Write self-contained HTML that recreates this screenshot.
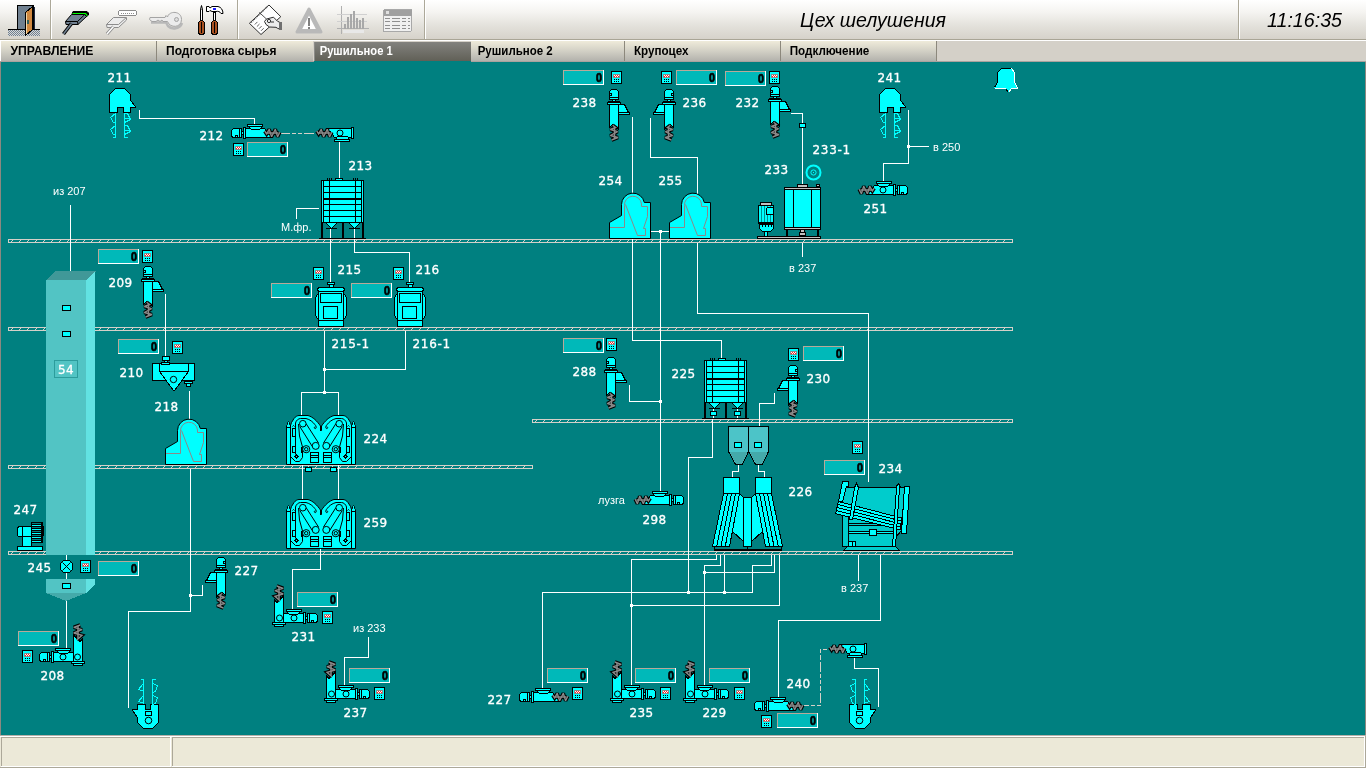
<!DOCTYPE html><html lang="ru"><head><meta charset="utf-8"><title>Цех шелушения</title><style>html,body{margin:0;padding:0;background:#008080;overflow:hidden}svg{display:block;will-change:transform}.lab{font-family:"DejaVu Sans","Liberation Sans",sans-serif;fill:#fff;stroke:#fff;stroke-width:.3px;letter-spacing:.4px}.sm{font-family:"Liberation Sans",sans-serif;fill:#fff}.dv{font-family:"Liberation Sans",sans-serif;font-weight:bold;font-size:12px;fill:#000;stroke:#000;stroke-width:.7px}.tab{font-family:"Liberation Sans",sans-serif;font-weight:bold;font-size:12px}.ttl{font-family:"Liberation Sans",sans-serif;font-style:italic;font-size:19.5px;fill:#000}</style></head><body><svg width="1366" height="768" viewBox="0 0 1366 768" shape-rendering="crispEdges"><defs><linearGradient id="tbg" x1="0" y1="0" x2="0" y2="1"><stop offset="0" stop-color="#ffffff"/><stop offset="0.3" stop-color="#f5f4f1"/><stop offset="0.65" stop-color="#e3e1db"/><stop offset="1" stop-color="#d5d1c9"/></linearGradient><linearGradient id="tab" x1="0" y1="0" x2="0" y2="1"><stop offset="0" stop-color="#efebda"/><stop offset="0.5" stop-color="#d2d0c5"/><stop offset="1" stop-color="#b3b2ac"/></linearGradient><linearGradient id="tabs" x1="0" y1="0" x2="0" y2="1"><stop offset="0" stop-color="#82827e"/><stop offset="1" stop-color="#616057"/></linearGradient><pattern id="dith" width="2" height="2" patternUnits="userSpaceOnUse"><rect width="2" height="2" fill="#d8d8d8"/><rect width="1" height="1" fill="#708090"/><rect x="1" y="1" width="1" height="1" fill="#708090"/></pattern><g id="disp"><rect x="0" y="0" width="41" height="15" fill="#ffffff"/><rect x="0" y="0" width="40" height="14" fill="#b9a999"/><rect x="1" y="1" width="39" height="13" fill="#00b9b9"/><text class="dv" x="33" y="12" textLength="6" lengthAdjust="spacingAndGlyphs">0</text></g><g id="calc"><rect x="0.5" y="0.5" width="10" height="12" fill="#00ffff" stroke="#000000"/><rect x="2.5" y="3.5" width="6" height="3" fill="#ff2020" stroke="#8a8a8a"/><rect x="3" y="4" width="1" height="1" fill="#fff"/><rect x="5" y="4" width="1" height="1" fill="#fff"/><rect x="7" y="4" width="1" height="1" fill="#fff"/><rect x="4" y="5" width="1" height="1" fill="#fff"/><rect x="6" y="5" width="1" height="1" fill="#fff"/><rect x="3" y="8" width="1" height="1" fill="#000"/><rect x="3" y="10" width="1" height="1" fill="#000"/><rect x="5" y="8" width="1" height="1" fill="#000"/><rect x="5" y="10" width="1" height="1" fill="#000"/><rect x="7" y="8" width="1" height="1" fill="#000"/><rect x="7" y="10" width="1" height="1" fill="#000"/></g><g id="hsc"><path d="M234.5,128.5 L241.5,128.5 L241.5,137.5 L234.5,137.5 Q231.5,137.5 231.5,134.5 L231.5,131.5 Q231.5,128.5 234.5,128.5 Z" fill="#00ffff" stroke="#000000"/><rect x="239" y="129" width="1" height="8" fill="#000000"/><rect x="235" y="135" width="3" height="2" fill="#000000"/><rect x="236" y="136" width="1" height="1" fill="#00ffff"/><rect x="241.5" y="131.5" width="2" height="3" fill="#00ffff" stroke="#000000"/><path d="M245.5,128.5 L264.5,128.5 L266.5,131.5 L268.5,131.5 L272.5,137.5 L245.5,137.5 Z" fill="#00ffff" stroke="#000000"/><rect x="243.5" y="127.5" width="2" height="11" fill="#00ffff" stroke="#000000"/><path d="M248.5,126.5 L262.5,126.5 L259.5,129.5 L251.5,129.5 Z" fill="#00ffff" stroke="#000000"/><rect x="247.5" y="124.5" width="15" height="2" fill="#00ffff" stroke="#000000"/><path d="M267,133 L278.5,133" fill="none" stroke="#000" stroke-width="3.6" shape-rendering="geometricPrecision"/><path d="M264.8,131.2 L266.6,134 L269.2,129.3 L271.6,136.8 L275.3,129.3 L277.6,136.8 L279.8,132.2" fill="none" stroke="#000" stroke-width="3.6" stroke-linejoin="miter" stroke-miterlimit="2.5" stroke-linecap="butt" shape-rendering="geometricPrecision"/><path d="M267,133 L278.5,133" fill="none" stroke="#8a8a8a" stroke-width="1.5" shape-rendering="geometricPrecision"/><path d="M264.8,131.2 L266.6,134 L269.2,129.3 L271.6,136.8 L275.3,129.3 L277.6,136.8 L279.8,132.2" fill="none" stroke="#8a8a8a" stroke-width="1.4" stroke-linejoin="miter" stroke-miterlimit="2.5" shape-rendering="geometricPrecision"/></g><g id="hscd"><path d="M234.5,128.5 L241.5,128.5 L241.5,137.5 L234.5,137.5 Q231.5,137.5 231.5,134.5 L231.5,131.5 Q231.5,128.5 234.5,128.5 Z" fill="#00ffff" stroke="#000000"/><rect x="239" y="129" width="1" height="8" fill="#000000"/><rect x="235" y="135" width="3" height="2" fill="#000000"/><rect x="236" y="136" width="1" height="1" fill="#00ffff"/><rect x="241.5" y="131.5" width="2" height="3" fill="#00ffff" stroke="#000000"/><path d="M245.5,128.5 L264.5,128.5 L266.5,131.5 L268.5,131.5 L272.5,137.5 L245.5,137.5 Z" fill="#00ffff" stroke="#000000"/><rect x="243.5" y="127.5" width="2" height="11" fill="#00ffff" stroke="#000000"/><path d="M248.5,126.5 L262.5,126.5 L259.5,129.5 L251.5,129.5 Z" fill="#00ffff" stroke="#000000"/><rect x="247.5" y="124.5" width="15" height="2" fill="#00ffff" stroke="#000000"/><circle cx="256" cy="133" r="3" fill="#00ffff" stroke="#000000" shape-rendering="geometricPrecision"/><path d="M267,133 L278.5,133" fill="none" stroke="#000" stroke-width="3.6" shape-rendering="geometricPrecision"/><path d="M264.8,131.2 L266.6,134 L269.2,129.3 L271.6,136.8 L275.3,129.3 L277.6,136.8 L279.8,132.2" fill="none" stroke="#000" stroke-width="3.6" stroke-linejoin="miter" stroke-miterlimit="2.5" stroke-linecap="butt" shape-rendering="geometricPrecision"/><path d="M267,133 L278.5,133" fill="none" stroke="#8a8a8a" stroke-width="1.5" shape-rendering="geometricPrecision"/><path d="M264.8,131.2 L266.6,134 L269.2,129.3 L271.6,136.8 L275.3,129.3 L277.6,136.8 L279.8,132.2" fill="none" stroke="#8a8a8a" stroke-width="1.4" stroke-linejoin="miter" stroke-miterlimit="2.5" shape-rendering="geometricPrecision"/></g><g id="send"><path d="M326.5,128.5 L351.5,128.5 L351.5,137.5 L334.5,137.5 L330.5,131.5 L328.5,131.5 Z" fill="#00ffff" stroke="#000000"/><rect x="351.5" y="127.5" width="2" height="11" fill="#00ffff" stroke="#000000"/><circle cx="340" cy="133" r="3" fill="#00ffff" stroke="#000000" shape-rendering="geometricPrecision"/><path d="M337.5,136.5 L347.5,136.5 L349.5,139.5 L335.5,139.5 Z" fill="#00ffff" stroke="#000000"/><rect x="334.5" y="139.5" width="15" height="2" fill="#00ffff" stroke="#000000"/><path d="M319,133 L330.5,133" fill="none" stroke="#000" stroke-width="3.6" shape-rendering="geometricPrecision"/><path d="M316.8,131.2 L318.6,134 L321.2,129.3 L323.6,136.8 L327.3,129.3 L329.6,136.8 L331.8,132.2" fill="none" stroke="#000" stroke-width="3.6" stroke-linejoin="miter" stroke-miterlimit="2.5" stroke-linecap="butt" shape-rendering="geometricPrecision"/><path d="M319,133 L330.5,133" fill="none" stroke="#8a8a8a" stroke-width="1.5" shape-rendering="geometricPrecision"/><path d="M316.8,131.2 L318.6,134 L321.2,129.3 L323.6,136.8 L327.3,129.3 L329.6,136.8 L331.8,132.2" fill="none" stroke="#8a8a8a" stroke-width="1.4" stroke-linejoin="miter" stroke-miterlimit="2.5" shape-rendering="geometricPrecision"/></g><g id="vf"><path d="M143.5,281.5 L152.5,281.5 L152.5,306.5 L150.5,303.5 L148.5,305.5 L146.5,301.5 L143.5,304.5 Z" fill="#00ffff" stroke="#000000"/><path d="M152.5,281.5 L158.5,281.5 L162.5,289.5 L152.5,289.5 Z" fill="#00ffff" stroke="#000000"/><rect x="152.5" y="289.5" width="11" height="2" fill="#00ffff" stroke="#000000"/><rect x="141.5" y="279.5" width="13" height="2" fill="#00ffff" stroke="#000000"/><rect x="146.5" y="276.5" width="3" height="3" fill="#00ffff" stroke="#000000"/><rect x="142" y="278" width="12" height="1" fill="#000000"/><path d="M143.5,276.5 L143.5,269.5 Q143.5,266.5 146.5,266.5 L149.5,266.5 Q152.5,266.5 152.5,269.5 L152.5,276.5 Z" fill="#00ffff" stroke="#000000"/><rect x="143" y="274" width="10" height="1" fill="#000000"/><rect x="143.5" y="270.5" width="2" height="2" fill="#00ffff" stroke="#000000"/><path d="M148.5,304.5 L148.5,316" fill="none" stroke="#000" stroke-width="3.6" shape-rendering="geometricPrecision"/><path d="M146.6,302.2 L149.6,304.5 L144.3,306.5 L151.6,308.7 L144.3,312.5 L151.9,314.5 L145.6,317" fill="none" stroke="#000" stroke-width="3.6" stroke-linejoin="miter" stroke-miterlimit="2.5" stroke-linecap="butt" shape-rendering="geometricPrecision"/><path d="M148.5,304.5 L148.5,316" fill="none" stroke="#8a8a8a" stroke-width="1.5" shape-rendering="geometricPrecision"/><path d="M146.6,302.2 L149.6,304.5 L144.3,306.5 L151.6,308.7 L144.3,312.5 L151.9,314.5 L145.6,317" fill="none" stroke="#8a8a8a" stroke-width="1.4" stroke-linejoin="miter" stroke-miterlimit="2.5" shape-rendering="geometricPrecision"/></g><g id="lc"><path d="M42.5,652.5 L49.5,652.5 L49.5,661.5 L42.5,661.5 Q39.5,661.5 39.5,658.5 L39.5,655.5 Q39.5,652.5 42.5,652.5 Z" fill="#00ffff" stroke="#000000"/><rect x="47" y="653" width="1" height="8" fill="#000000"/><rect x="43" y="659" width="3" height="2" fill="#000000"/><rect x="44" y="660" width="1" height="1" fill="#00ffff"/><rect x="49.5" y="655.5" width="2" height="3" fill="#00ffff" stroke="#000000"/><rect x="53.5" y="652.5" width="20" height="9" fill="#00ffff" stroke="#000000"/><rect x="51.5" y="651.5" width="2" height="11" fill="#00ffff" stroke="#000000"/><path d="M56.5,650.5 L70.5,650.5 L67.5,653.5 L59.5,653.5 Z" fill="#00ffff" stroke="#000000"/><rect x="55.5" y="648.5" width="15" height="2" fill="#00ffff" stroke="#000000"/><circle cx="63" cy="657" r="3" fill="#00ffff" stroke="#000000" shape-rendering="geometricPrecision"/><path d="M73.5,661.5 L73.5,633.5 L75.5,637.5 L77.5,636.5 L79.5,641.5 L81.5,640.5 L82.5,638.5 L82.5,661.5 Z" fill="#00ffff" stroke="#000000"/><circle cx="77.5" cy="657" r="3" fill="#00ffff" stroke="#000000" shape-rendering="geometricPrecision"/><rect x="71.5" y="661.5" width="13" height="2" fill="#00ffff" stroke="#000000"/><rect x="73.5" y="663.5" width="9" height="2" fill="#00ffff" stroke="#000000"/><path d="M78,626 L78,638.5" fill="none" stroke="#000" stroke-width="3.6" shape-rendering="geometricPrecision"/><path d="M80.2,625 L73.8,627.3 L82,629.7 L73.8,633 L82,635.3 L77,639.8" fill="none" stroke="#000" stroke-width="3.6" stroke-linejoin="miter" stroke-miterlimit="2.5" stroke-linecap="butt" shape-rendering="geometricPrecision"/><path d="M78,626 L78,638.5" fill="none" stroke="#8a8a8a" stroke-width="1.5" shape-rendering="geometricPrecision"/><path d="M80.2,625 L73.8,627.3 L82,629.7 L73.8,633 L82,635.3 L77,639.8" fill="none" stroke="#8a8a8a" stroke-width="1.4" stroke-linejoin="miter" stroke-miterlimit="2.5" shape-rendering="geometricPrecision"/></g><g id="ehead"><path d="M115.5,88.5 L124.5,88.5 L130.5,94.5 L130.5,100.5 L135.5,106.5 L135.5,107.5 L130.5,107.5 L130.5,112.5 L123.5,112.5 L123.5,107.5 L117.5,107.5 L117.5,112.5 L109.5,112.5 L109.5,94.5 Z" fill="#00ffff" stroke="#000000"/><path d="M113.5,137.5 L115.5,137.5 L115.5,113.5" fill="none" stroke="#00ffff" stroke-linecap="square"/><path d="M127.5,137.5 L124.5,137.5 L124.5,113.5" fill="none" stroke="#00ffff" stroke-linecap="square"/><path d="M115.5,113.5 L110.5,117.5 L113.5,122.5 L115.5,122.5" fill="none" stroke="#00ffff" stroke-linecap="square"/><path d="M124.5,113.5 L127.5,113.5 L130.5,119.5 L124.5,122.5" fill="none" stroke="#00ffff" stroke-linecap="square"/><path d="M124.5,118.5 L129.5,118.5" fill="none" stroke="#00ffff" stroke-linecap="square"/><path d="M115.5,125.5 L110.5,129.5 L113.5,134.5 L115.5,134.5" fill="none" stroke="#00ffff" stroke-linecap="square"/><path d="M124.5,125.5 L127.5,125.5 L130.5,131.5 L124.5,134.5" fill="none" stroke="#00ffff" stroke-linecap="square"/><path d="M124.5,130.5 L129.5,130.5" fill="none" stroke="#00ffff" stroke-linecap="square"/></g><g id="efoot"><path d="M137.5,704.5 L145.5,704.5 L145.5,709.5 L150.5,709.5 L150.5,704.5 L158.5,704.5 L158.5,722.5 L152.5,728.5 L143.5,728.5 L137.5,722.5 L137.5,717.5 L132.5,710.5 L132.5,709.5 L137.5,709.5 Z" fill="#00ffff" stroke="#000000"/><rect x="145.5" y="711.5" width="6" height="4" fill="#00ffff" stroke="#000000"/><circle cx="148.5" cy="720.5" r="3.3" fill="#00ffff" stroke="#000000" shape-rendering="geometricPrecision"/><path d="M141.5,679.5 L143.5,679.5 L143.5,703.5" fill="none" stroke="#00ffff" stroke-linecap="square"/><path d="M155.5,679.5 L152.5,679.5 L152.5,703.5" fill="none" stroke="#00ffff" stroke-linecap="square"/><path d="M143.5,683.5 L138.5,689.5 L141.5,690.5 L143.5,690.5" fill="none" stroke="#00ffff" stroke-linecap="square"/><path d="M152.5,683.5 L157.5,685.5 L155.5,691.5 L152.5,692.5" fill="none" stroke="#00ffff" stroke-linecap="square"/><path d="M143.5,695.5 L138.5,701.5 L141.5,702.5 L143.5,702.5" fill="none" stroke="#00ffff" stroke-linecap="square"/><path d="M152.5,695.5 L157.5,697.5 L155.5,703.5 L152.5,704.5" fill="none" stroke="#00ffff" stroke-linecap="square"/></g><g id="bin"><rect x="321" y="222" width="2" height="17" fill="#000000"/><rect x="342" y="222" width="2" height="17" fill="#000000"/><rect x="362" y="222" width="2" height="17" fill="#000000"/><rect x="319" y="238" width="47" height="1" fill="#000000"/><rect x="321.5" y="180.5" width="42" height="42" fill="#00ffff" stroke="#000000"/><rect x="323" y="180" width="1" height="43" fill="#000000"/><rect x="361" y="180" width="1" height="43" fill="#000000"/><rect x="329" y="180" width="1" height="43" fill="#000000"/><rect x="355" y="180" width="1" height="43" fill="#000000"/><rect x="323" y="186" width="39" height="1" fill="#000000"/><rect x="323" y="192" width="39" height="1" fill="#000000"/><rect x="323" y="204" width="39" height="1" fill="#000000"/><rect x="323" y="210" width="39" height="1" fill="#000000"/><rect x="323" y="216" width="39" height="1" fill="#000000"/><rect x="323" y="198" width="39" height="2" fill="#000000"/><rect x="335.5" y="178.5" width="7" height="2" fill="#00ffff" stroke="#000000"/><rect x="327" y="178" width="1" height="2" fill="#000000"/><rect x="329" y="178" width="1" height="2" fill="#000000"/><rect x="331" y="178" width="1" height="2" fill="#000000"/><rect x="353" y="178" width="1" height="2" fill="#000000"/><rect x="355" y="178" width="1" height="2" fill="#000000"/><rect x="357" y="178" width="1" height="2" fill="#000000"/><path d="M325.5,222.5 L337.5,222.5 L331.5,228.5 Z" fill="#00ffff" stroke="#000000"/><rect x="326" y="228" width="11" height="1" fill="#000000"/><path d="M348.5,222.5 L360.5,222.5 L354.5,228.5 Z" fill="#00ffff" stroke="#000000"/><rect x="349" y="228" width="11" height="1" fill="#000000"/></g><g id="m215"><path d="M318.5,293.5 L316.5,295.5 L315.5,298.5 L315.5,314.5 L316.5,317.5 L318.5,319.5" fill="#00ffff" stroke="#000000"/><path d="M343.5,293.5 L345.5,295.5 L346.5,298.5 L346.5,314.5 L345.5,317.5 L343.5,319.5" fill="#00ffff" stroke="#000000"/><rect x="318.5" y="291.5" width="25" height="35" fill="#00ffff" stroke="#000000"/><path d="M318.5,291.5 L317.5,289.5 L318.5,287.5 L343.5,287.5 L344.5,289.5 L343.5,291.5 Z" fill="#00ffff" stroke="#000000"/><rect x="329.5" y="284.5" width="4" height="3" fill="#00ffff" stroke="#000000"/><rect x="327.5" y="282.5" width="7" height="2" fill="#00ffff" stroke="#000000"/><rect x="320.5" y="293.5" width="21" height="9" fill="#00ffff" stroke="#000000"/><rect x="323.5" y="306.5" width="14" height="12" fill="#00ffff" stroke="#000000"/><rect x="318" y="320" width="26" height="1" fill="#000000"/></g><g id="m218"><path d="M165.5,464.5 L165.5,448.5 L177.5,441.5 L177.5,430.5 A11.500,11.5 0 0 1 200.3,428.5 L206.5,428.5 L206.5,464.5 Z" fill="#00ffff" stroke="#000000" shape-rendering="geometricPrecision"/><path d="M166,453.5 L180.5,453.5 L180.5,431.5 A8.5,8.5 0 0 1 197.5,430 L197.5,432.5 L203.5,432.5 L203.5,442.5 L199.5,454.5 L201.5,454.5 L201.5,461.5 L193.5,461.5 L181.500,430.5" fill="none" stroke="#8a8a8a" shape-rendering="geometricPrecision"/></g><g id="m224"><g id="h224"><path d="M321.5,464.5 L286.5,464.5 L286.5,425.5 L287.5,424.5 L287.5,422.5 L288.5,421.5 L289.5,422.5 L289.5,424.5 L290.5,425.5 L291.5,422.5 L294,418.5 C295.5,416.5 297.5,415.5 299,415.5 L308,415.5 C313,417 317,421 320.5,426 L320.5,430.5 L321.5,430.5 Z" fill="#00ffff" stroke="none" shape-rendering="geometricPrecision"/><path d="M321.5,464.5 L286.5,464.5 L286.5,425.5 L287.5,424.5 L287.5,422.5 L288.5,421.5 L289.5,422.5 L289.5,424.5 L290.5,425.5 L291.5,422.5 L294,418.5 C295.5,416.5 297.5,415.5 299,415.5 L308,415.5 C313,417 317,421 320.5,426 L320.5,430.5 L321.5,430.5" fill="none" stroke="#000000" shape-rendering="geometricPrecision"/><rect x="290" y="425" width="1" height="40" fill="#000000"/><rect x="286" y="427" width="5" height="1" fill="#000000"/><path d="M290.5,456.5 L295.5,461.5 L299.5,461.5 L302.5,457.5 L302.5,447 L299.500,436 L298.5,424" fill="none" stroke="#000000" shape-rendering="geometricPrecision"/><rect x="301" y="447" width="2" height="6" fill="#000000"/><path d="M295.5,454.5 L295.5,423 C296,420.5 298.5,418.5 300.5,418.5 L306,418.5 C310,419.5 313,422 314.8,424.5 C316.6,426 316.500,428.6 315.3,428.6 C314.2,428.6 314,427.2 315,426.6" fill="none" stroke="#000000" shape-rendering="geometricPrecision"/><path d="M292.500,426.5 L293.5,425.5 L294.5,426.5" fill="none" stroke="#000000" shape-rendering="geometricPrecision"/><path d="M299.8,426.5 L312.3,446.5 M306,423.5 L318.5,443" fill="none" stroke="#000000" shape-rendering="geometricPrecision"/><circle cx="302.8" cy="423.7" r="3.3" fill="#00ffff" stroke="#000000" shape-rendering="geometricPrecision"/><circle cx="315.7" cy="445.9" r="3.5" fill="#00ffff" stroke="#000000" shape-rendering="geometricPrecision"/><circle cx="306.2" cy="449.2" r="3.6" fill="#00ffff" stroke="#000000" shape-rendering="geometricPrecision"/><circle cx="306.2" cy="449.2" r="1.7" fill="#00ffff" stroke="#000000" shape-rendering="geometricPrecision"/><rect x="292.5" y="428.5" width="3" height="8" fill="#00ffff" stroke="#000000"/><rect x="292.5" y="446.5" width="3" height="6" fill="#00ffff" stroke="#000000"/><path d="M295,456.5 L296.5,455 L298,456.5 L296.5,458 Z" fill="#00ffff" stroke="#000000"/><rect x="310.5" y="452.5" width="8" height="10" fill="#00ffff" stroke="#000000"/><rect x="310" y="455" width="9" height="1" fill="#000000"/><rect x="310" y="457" width="9" height="1" fill="#000000"/></g><use href="#h224" transform="translate(642,0) scale(-1,1)"/><rect x="320" y="426" width="2" height="4" fill="#000000"/><rect x="320" y="430" width="1" height="1" fill="#000000"/></g><g id="hop2"><path d="M728.5,426.5 L748.5,426.5 L748.5,451.5 L742.5,464.5 L735.5,464.5 L728.5,451.5 Z" fill="#4cc4c8" stroke="#000000"/><path d="M729.5,452.5 L747.5,452.5 L741.5,463.5 L736.5,463.5 Z" fill="#44aaaa" stroke="#44aaaa"/><path d="M728.5,451.5 L735.5,464.5 L742.5,464.5 L748.5,451.5" fill="none" stroke="#000000"/><rect x="734.5" y="442.5" width="7" height="5" fill="#00ffff" stroke="#000000"/><path d="M748.5,426.5 L768.5,426.5 L768.5,451.5 L762.5,464.5 L755.5,464.5 L748.5,451.5 Z" fill="#4cc4c8" stroke="#000000"/><path d="M749.5,452.5 L767.5,452.5 L761.5,463.5 L756.5,463.5 Z" fill="#44aaaa" stroke="#44aaaa"/><path d="M748.5,451.5 L755.5,464.5 L762.5,464.5 L768.5,451.5" fill="none" stroke="#000000"/><rect x="754.5" y="442.5" width="7" height="5" fill="#00ffff" stroke="#000000"/></g><g id="m226"><path d="M739.5,493.5 L743.5,497.5 L743.5,541.5 L732.5,531.5 L729.5,546.5 Z" fill="#00ffff" stroke="#000000"/><path d="M755.5,493.5 L751.5,497.5 L751.5,541.5 L762.5,531.5 L765.5,546.5 Z" fill="#00ffff" stroke="#000000"/><path d="M723.5,493.5 L739.5,493.5 L729.5,546.5 L712.5,546.5 Z" fill="#00ffff" stroke="#000000"/><path d="M755.5,493.5 L771.5,493.5 L782.5,546.5 L765.5,546.5 Z" fill="#00ffff" stroke="#000000"/><path d="M727.5,493.5 L716.75,546.5" fill="none" stroke="#000000"/><path d="M759.5,493.5 L769.75,546.5" fill="none" stroke="#000000"/><path d="M731.5,493.5 L721,546.5" fill="none" stroke="#000000"/><path d="M763.5,493.5 L774,546.5" fill="none" stroke="#000000"/><path d="M735.5,493.5 L725.25,546.5" fill="none" stroke="#000000"/><path d="M767.5,493.5 L778.25,546.5" fill="none" stroke="#000000"/><rect x="743.5" y="497.5" width="8" height="49" fill="#00ffff" stroke="#000000"/><rect x="723.5" y="477.5" width="16" height="16" fill="#00ffff" stroke="#000000"/><rect x="755.5" y="477.5" width="16" height="16" fill="#00ffff" stroke="#000000"/><rect x="714" y="549" width="68" height="2" fill="#000000"/><rect x="714" y="547" width="1" height="3" fill="#000000"/><rect x="781" y="547" width="1" height="3" fill="#000000"/><rect x="747" y="547" width="1" height="3" fill="#000000"/></g><g id="m234"><path d="M847.5,546.5 L895.5,546.5 L899.5,550.5 L843.5,550.5 Z" fill="#00cccc" stroke="#000000"/><path d="M842.5,487.5 L904.5,487.5 L901.5,530.5 L895.5,537.5 L895.5,546.5 L842.5,546.5 Z" fill="#00cccc" stroke="#000000"/><rect x="848" y="523" width="46" height="1" fill="#000000"/><rect x="848" y="525" width="46" height="1" fill="#000000"/><rect x="848" y="531" width="46" height="1" fill="#000000"/><rect x="848" y="533" width="46" height="1" fill="#000000"/><rect x="849" y="532" width="44" height="1" fill="#00ffff"/><rect x="848" y="512" width="1" height="35" fill="#000000"/><rect x="869.5" y="529.5" width="7" height="6" fill="#00ffff" stroke="#000000"/><rect x="848.5" y="541.5" width="7" height="5" fill="#00ffff" stroke="#000000"/><rect x="852" y="541" width="1" height="6" fill="#000000"/><path d="M838.5,501.5 L901.5,518 L901.5,521 L837.5,504.5 Z" fill="#00ffff" stroke="#000000"/><path d="M837.8,504.5 L901.2,521 L901.2,524 L836.8,507.5 Z" fill="#00ffff" stroke="#000000"/><path d="M837.1,507.5 L900.9,524 L900.9,527 L836.1,510.5 Z" fill="#00ffff" stroke="#000000"/><path d="M836.4,510.5 L900.6,527 L900.6,530 L835.4,513.5 Z" fill="#00ffff" stroke="#000000"/><path d="M842.5,481.5 L848.5,481.5 L848.5,486.5 L846.5,486.5 L842.5,501.5 L838.5,501.5 Z" fill="#00ffff" stroke="#000000"/><path d="M856.5,483.5 L858.5,487.5 L852.5,519.5 L849.5,519.5 L854.5,487.5 Z" fill="#00ffff" stroke="#000000"/><path d="M898.5,483.5 L900.5,487.5 L899.5,487.5 L895.5,546.5 L892.5,546.5 L896.5,487.5 L895.5,487.5 Z" fill="#00ffff" stroke="#000000"/><path d="M904.5,486.5 L909.5,486.5 L906.5,533.5 L901.5,533.5 Z" fill="#00ffff" stroke="#000000"/></g><g id="tank"><rect x="786" y="229" width="2" height="9" fill="#000000"/><rect x="817" y="229" width="2" height="9" fill="#000000"/><rect x="800.5" y="229.5" width="4" height="3" fill="#c0c0c0" stroke="#000000"/><rect x="799.5" y="232.5" width="6" height="3" fill="#c0c0c0" stroke="#000000"/><rect x="757.5" y="236.5" width="63" height="2" fill="#c0c0c0" stroke="#000000"/><rect x="784.5" y="187.5" width="36" height="42" fill="#00ffff" stroke="#000000"/><rect x="784.5" y="187.5" width="36" height="2" fill="#c0c0c0" stroke="#000000"/><rect x="784.5" y="227.5" width="36" height="2" fill="#c0c0c0" stroke="#000000"/><rect x="793" y="189" width="1" height="39" fill="#000000"/><rect x="811" y="189" width="1" height="39" fill="#000000"/><rect x="797.5" y="184.5" width="10" height="3" fill="#c0c0c0" stroke="#000000"/><rect x="816.5" y="184.5" width="3" height="2" fill="#c0c0c0" stroke="#000000"/><rect x="760.5" y="202.5" width="11" height="3" fill="#c0c0c0" stroke="#000000"/><rect x="758.5" y="205.5" width="15" height="17" fill="#00ffff" stroke="#000000"/><rect x="761" y="206" width="1" height="16" fill="#009090"/><rect x="764" y="206" width="1" height="16" fill="#009090"/><rect x="767" y="206" width="1" height="16" fill="#009090"/><rect x="770" y="206" width="1" height="16" fill="#009090"/><rect x="766.5" y="207.5" width="7" height="7" rx="1.5" fill="#0ff" stroke="#000"/><rect x="758" y="222" width="16" height="2" fill="#000000"/><path d="M759.5,224.5 L773.5,224.5 L773.5,228.5 L770.5,231.5 L762.5,231.5 L759.5,228.5 Z" fill="#00ffff" stroke="#000000"/><rect x="762" y="224" width="1" height="3" fill="#000000"/><rect x="765" y="224" width="1" height="3" fill="#000000"/><rect x="768" y="224" width="1" height="3" fill="#000000"/><rect x="771" y="224" width="1" height="3" fill="#000000"/><rect x="764.5" y="231.5" width="3" height="5" fill="#00ffff" stroke="#000000"/></g><g id="fan"><rect x="22.5" y="536.5" width="9" height="10" fill="#00ffff" stroke="#000000"/><path d="M31.5,526.5 L31.5,536.5 L20,536.5 Q17.5,536.5 17.5,534 L17.5,529 Q17.5,526.5 20,526.5 Z" fill="#0ff" stroke="#000"/><rect x="22" y="526" width="1" height="21" fill="#000000"/><rect x="31" y="522" width="12" height="21" fill="#000000"/><rect x="32" y="523" width="9" height="1" fill="#008080"/><rect x="32" y="525" width="9" height="1" fill="#00ffff"/><rect x="32" y="527" width="9" height="1" fill="#008080"/><rect x="32" y="529" width="9" height="1" fill="#00ffff"/><rect x="32" y="531" width="9" height="1" fill="#008080"/><rect x="32" y="533" width="9" height="1" fill="#00ffff"/><rect x="32" y="535" width="9" height="1" fill="#008080"/><rect x="32" y="537" width="9" height="1" fill="#00ffff"/><rect x="32" y="539" width="9" height="1" fill="#008080"/><rect x="32" y="541" width="9" height="1" fill="#00ffff"/><rect x="42" y="526" width="2" height="10" fill="#000000"/><rect x="17.5" y="546.5" width="25" height="4" fill="#00ffff" stroke="#000000"/></g><g id="hop210"><rect x="184.5" y="381.5" width="8" height="2" fill="#00ffff" stroke="#000000"/><rect x="186.5" y="383.5" width="4" height="3" fill="#00ffff" stroke="#000000"/><rect x="152.5" y="363.5" width="42" height="17" fill="#00ffff" stroke="#000000"/><rect x="159" y="363" width="1" height="9" fill="#000000"/><rect x="188" y="363" width="1" height="9" fill="#000000"/><path d="M159.5,371.5 L188.5,371.5 L174.5,390.5 L173.5,390.5 Z" fill="#00ffff" stroke="#000000"/><circle cx="173.5" cy="379.5" r="3.2" fill="#00ffff" stroke="#000000" shape-rendering="geometricPrecision"/><rect x="161.5" y="362.5" width="8" height="2" fill="#00ffff" stroke="#000000"/><rect x="164.5" y="360.5" width="3" height="2" fill="#00ffff" stroke="#000000"/><rect x="162.5" y="356.5" width="7" height="4" fill="#00ffff" stroke="#000000"/></g><g id="bell"><path d="M1001.5,68.5 L1011.5,68.5 L1014.5,72.5 L1014.5,82.5 L1017.5,87.5 L1017.5,88.5 L1011.5,88.5 L1008.5,92.5 L1005.5,88.5 L994.5,88.5 L994.5,87.5 L997.5,82.5 L997.5,72.5 Z" fill="#00ffff" stroke="none"/><path d="M1011.5,68.5 L1001.5,68.5 L997.5,72.5 L997.5,82.5 L994.5,87.5 M1005.5,88.5 L1008,92" fill="none" stroke="#000000"/><path d="M1011.5,68.5 L1014.5,72.5 L1014.5,82.5 L1017.5,87.5 L1017.5,88.5 L1011.5,88.5 L1008.5,92.5 M1005.5,88.5 L994.5,88.5" fill="none" stroke="#ffffff"/></g></defs><rect x="0" y="62" width="1366" height="673" fill="#008080"/>
<rect x="0" y="0" width="1366" height="40" fill="url(#tbg)"/>
<rect x="0" y="39" width="1366" height="1" fill="#a9a596"/>
<rect x="0" y="40" width="1366" height="1" fill="#ffffff"/>
<rect x="50" y="0" width="1" height="39" fill="#aca899"/>
<rect x="51" y="0" width="1" height="39" fill="#ffffff"/>
<rect x="237" y="0" width="1" height="39" fill="#aca899"/>
<rect x="238" y="0" width="1" height="39" fill="#ffffff"/>
<rect x="424" y="0" width="1" height="39" fill="#aca899"/>
<rect x="425" y="0" width="1" height="39" fill="#ffffff"/>
<rect x="1238" y="0" width="1" height="39" fill="#aca899"/>
<rect x="1239" y="0" width="1" height="39" fill="#ffffff"/>
<rect x="0" y="41" width="1366" height="20" fill="#d4d0c8"/>
<rect x="1" y="41" width="155" height="20" fill="url(#tab)"/>
<rect x="156" y="41" width="1" height="20" fill="#8c887c"/>
<text class="tab" x="10.4" y="55" textLength="83" lengthAdjust="spacingAndGlyphs" fill="#000">УПРАВЛЕНИЕ</text>
<rect x="157" y="41" width="156" height="20" fill="url(#tab)"/>
<text class="tab" x="166" y="55" textLength="110.5" lengthAdjust="spacingAndGlyphs" fill="#000">Подготовка сырья</text>
<rect x="315" y="42" width="156" height="19" fill="url(#tabs)"/>
<rect x="314" y="42" width="1" height="19" fill="#8c8c88"/>
<text class="tab" x="319.7" y="55" textLength="73" lengthAdjust="spacingAndGlyphs" fill="#fff">Рушильное 1</text>
<rect x="471" y="41" width="153" height="20" fill="url(#tab)"/>
<rect x="624" y="41" width="1" height="20" fill="#8c887c"/>
<text class="tab" x="477.7" y="55" textLength="75" lengthAdjust="spacingAndGlyphs" fill="#000">Рушильное 2</text>
<rect x="625" y="41" width="155" height="20" fill="url(#tab)"/>
<rect x="780" y="41" width="1" height="20" fill="#8c887c"/>
<text class="tab" x="633.9" y="55" textLength="54.6" lengthAdjust="spacingAndGlyphs" fill="#000">Крупоцех</text>
<rect x="781" y="41" width="155" height="20" fill="url(#tab)"/>
<rect x="936" y="41" width="1" height="20" fill="#8c887c"/>
<text class="tab" x="789.7" y="55" textLength="79.6" lengthAdjust="spacingAndGlyphs" fill="#000">Подключение</text>
<rect x="0" y="41" width="1" height="20" fill="#ffffff"/>
<rect x="0" y="61" width="314" height="1" fill="#a9a29e"/>
<rect x="471" y="61" width="895" height="1" fill="#a9a29e"/>
<rect x="314" y="61" width="157" height="1" fill="#008080"/>
<text class="ttl" x="800" y="27" textLength="146" lengthAdjust="spacingAndGlyphs">Цех шелушения</text>
<text class="ttl" x="1267" y="27" textLength="75" lengthAdjust="spacingAndGlyphs">11:16:35</text>
<rect x="0" y="62" width="1" height="673" fill="#8c8880"/>
<rect x="1365" y="62" width="1" height="673" fill="#8c8880"/>
<rect x="0" y="735" width="1366" height="33" fill="#ece9d8"/>
<rect x="0" y="735" width="1366" height="1" fill="#b4b0a8"/>
<rect x="0" y="736" width="1366" height="1" fill="#ffffff"/>
<rect x="1" y="737" width="169" height="1" fill="#aca899"/>
<rect x="1" y="737" width="1" height="29" fill="#aca899"/>
<rect x="1" y="766" width="170" height="1" fill="#fff"/>
<rect x="170" y="737" width="1" height="30" fill="#fff"/>
<rect x="172" y="737" width="1192" height="1" fill="#aca899"/>
<rect x="172" y="737" width="1" height="29" fill="#aca899"/>
<rect x="172" y="766" width="1193" height="1" fill="#fff"/>
<rect x="1364" y="737" width="1" height="30" fill="#fff"/>
<rect x="1365" y="736" width="1" height="32" fill="#aca899"/>
<rect x="0" y="767" width="1366" height="1" fill="#aca899"/>
<rect x="34" y="7" width="1" height="22" fill="#202840"/>
<rect x="17.5" y="5.5" width="16" height="24" fill="#708090" stroke="#000000"/>
<rect x="8" y="30" width="32" height="6" fill="url(#dith)"/>
<rect x="8" y="29" width="10" height="1" fill="#000000"/>
<rect x="33" y="29" width="7" height="1" fill="#000000"/>
<path d="M32.5,6.5 L32.5,29.5 L25.5,35.5 L25.5,12.5 Z" fill="#d08840" stroke="#000000"/>
<rect x="26" y="13" width="1" height="21" fill="#f4d8a8"/>
<rect x="27.5" y="20.5" width="1" height="3" fill="#c0e0e0" stroke="#306060"/>
<path d="M73,11.5 L87,11.5 L88.5,13 L88.5,15 L86,17 L72,13.5 Z" fill="#000000" stroke="#000000" shape-rendering="geometricPrecision"/>
<path d="M72.5,13.6 L85.5,13.6 L87.3,15.6" fill="none" stroke="#00ff00" stroke-width="1.4" shape-rendering="geometricPrecision"/>
<path d="M71.5,14.5 L84.5,14.5 L86.5,16.5 L78,24.5 L66,24.5 L65.5,21.5 Z" fill="#708090" stroke="#000000" shape-rendering="geometricPrecision"/>
<path d="M65.5,21.5 L77.5,21.5 L84.5,14.8 M77.5,21.5 L78,24.5" fill="none" stroke="#000000" shape-rendering="geometricPrecision"/>
<path d="M71.5,23.5 L63.5,34" fill="none" stroke="#000000" stroke-width="3.6" shape-rendering="geometricPrecision"/>
<path d="M71.5,23.5 L63.5,34" fill="none" stroke="#708090" stroke-width="1.6" shape-rendering="geometricPrecision"/>
<rect x="118.5" y="10.5" width="18" height="5" rx="2" fill="#fff" stroke="#8c8c8c"/>
<rect x="121" y="13" width="1" height="1" fill="#8c8c8c"/>
<rect x="123" y="13" width="1" height="1" fill="#8c8c8c"/>
<rect x="125" y="13" width="1" height="1" fill="#8c8c8c"/>
<rect x="127" y="13" width="1" height="1" fill="#8c8c8c"/>
<rect x="129" y="13" width="1" height="1" fill="#8c8c8c"/>
<rect x="131" y="13" width="1" height="1" fill="#8c8c8c"/>
<rect x="133" y="13" width="1" height="1" fill="#8c8c8c"/>
<path d="M113.5,17.5 L126.5,17.5 L126.5,20 L118.5,27.5 L107,27.5 L106.5,24.5 Z" fill="#ececec" stroke="#8c8c8c" shape-rendering="geometricPrecision"/>
<path d="M106.5,24.5 L118.5,24.5 L126,17.8" fill="none" stroke="#8c8c8c" shape-rendering="geometricPrecision"/>
<path d="M113.5,26.5 L107,34" fill="none" stroke="#8c8c8c" stroke-width="3.2" shape-rendering="geometricPrecision"/>
<path d="M113.5,26.5 L107,34" fill="none" stroke="#fff" stroke-width="1.4" shape-rendering="geometricPrecision"/>
<path d="M151,22.5 L166,22.5 L168,26 C172,30 180,29 182,23" fill="none" stroke="#b8b8b8" stroke-width="2.5" shape-rendering="geometricPrecision"/>
<path d="M150,17.5 L165,17.5 L166,15.5 L167.5,17 C169,10.5 181.5,10.5 181.5,19.5 C181.500,28 170,28.500 167.5,21.5 L163,21.5 L162,20 L160,21.5 L158,20 L156,21.5 L152,21.500 L149.5,19.5 Z" fill="#ececec" stroke="#a4a4a4" shape-rendering="geometricPrecision"/>
<circle cx="176.5" cy="19.5" r="2" fill="#dcdcdc" stroke="#a4a4a4" shape-rendering="geometricPrecision"/>
<rect x="198.5" y="20.5" width="6" height="14" rx="3" fill="#a85020" stroke="#000"/>
<rect x="201" y="22" width="1" height="11" fill="#000000"/>
<rect x="200.5" y="9.5" width="2" height="11" fill="#fff" stroke="#000000"/>
<path d="M200.5,9.5 L201.5,5.5 L202.5,9.5" fill="#fff" stroke="#000000" shape-rendering="geometricPrecision"/>
<rect x="211.5" y="20.5" width="6" height="14" rx="3" fill="#a85020" stroke="#000"/>
<rect x="214" y="22" width="1" height="11" fill="#000000"/>
<rect x="213.5" y="12.5" width="2" height="8" fill="#fff" stroke="#000000"/>
<path d="M206.5,6.5 L209,6.5 L210,8 L212,6.500 L218,6.5 C221,7 223,10 223,13.5 L221,13.500 C220,11.5 218,11 216,11.5 L212,11.5 L210,10.500 L209,11.5 L206.5,11.5 Z" fill="#fff" stroke="#000000" shape-rendering="geometricPrecision"/>
<rect x="213" y="8" width="3" height="2" fill="#2020ff"/>
<path d="M269,5 L280.8,16.7 L261,34.5 L249.4,23.3 Z" fill="#fff" stroke="#303030" shape-rendering="geometricPrecision"/>
<path d="M267.6,6.3 L251,22.800" fill="none" stroke="#505050" stroke-width="1.2" stroke-dasharray="1 1" shape-rendering="geometricPrecision"/>
<path d="M259,12.5 L261,14 L274,26" fill="none" stroke="#404040" stroke-width=".9" shape-rendering="geometricPrecision"/>
<path d="M254.8,24.5 l2.6,-2.6" fill="none" stroke="#505050" stroke-width=".9" shape-rendering="geometricPrecision"/>
<path d="M256.9,26.6 l2.6,-2.6" fill="none" stroke="#505050" stroke-width=".9" shape-rendering="geometricPrecision"/>
<path d="M259,28.7 l2.6,-2.6" fill="none" stroke="#505050" stroke-width=".9" shape-rendering="geometricPrecision"/>
<path d="M261.1,30.8 l2.6,-2.6" fill="none" stroke="#505050" stroke-width=".9" shape-rendering="geometricPrecision"/>
<path d="M264.5,21.500 L266.5,19 L273.5,17.2 L277.8,21.5 L279.5,22 L279.5,29 L277.5,28.3 L276,27.3 L269.5,27 L266,24.5 Z" fill="#ececec" stroke="#303030" shape-rendering="geometricPrecision"/>
<rect x="279" y="22" width="3" height="8" fill="#707070"/>
<circle cx="269" cy="21" r="1.6" fill="#fff" stroke="#303030" shape-rendering="geometricPrecision"/>
<path d="M270.5,22 L274,22" fill="none" stroke="#303030" shape-rendering="geometricPrecision"/>
<path d="M309,9 L321,32 L297,32 Z" fill="#b9b9b9" stroke="#b9b9b9" stroke-width="3" stroke-linejoin="round" shape-rendering="geometricPrecision"/>
<path d="M309,15.5 L315.8,29 L302.2,29 Z" fill="#fff" stroke="none" shape-rendering="geometricPrecision"/>
<rect x="308" y="18" width="2" height="8" fill="#808080"/>
<rect x="308" y="27" width="2" height="2" fill="#808080"/>
<rect x="341" y="6" width="1" height="28" fill="#b0b0b0"/>
<rect x="337" y="28" width="32" height="1" fill="#b0b0b0"/>
<rect x="337" y="14" width="30" height="1" fill="#d0d0d0"/>
<rect x="337" y="21" width="30" height="1" fill="#d0d0d0"/>
<rect x="344" y="24" width="2" height="5" fill="#a8a8a8"/>
<rect x="347" y="17" width="2" height="12" fill="#a8a8a8"/>
<rect x="350" y="14" width="2" height="15" fill="#a8a8a8"/>
<rect x="353" y="11" width="2" height="18" fill="#a8a8a8"/>
<rect x="356" y="18" width="2" height="11" fill="#a8a8a8"/>
<rect x="359" y="20" width="2" height="9" fill="#a8a8a8"/>
<rect x="362" y="18" width="2" height="11" fill="#a8a8a8"/>
<rect x="343" y="30" width="21" height="3" fill="#e8e8e8"/>
<rect x="383.5" y="9.5" width="28" height="22" rx="1.500" fill="#f0f0f0" stroke="#a8a8a8"/>
<rect x="384" y="10" width="28" height="6" fill="#a0a0a0"/>
<rect x="386" y="11" width="3" height="3" fill="#e0e0e0"/>
<rect x="385" y="18" width="5" height="1" fill="#909090"/>
<rect x="392" y="18" width="8" height="1" fill="#909090"/>
<rect x="402" y="18" width="4" height="1" fill="#909090"/>
<rect x="408" y="18" width="2" height="1" fill="#909090"/>
<rect x="385" y="21" width="5" height="1" fill="#909090"/>
<rect x="392" y="21" width="8" height="1" fill="#909090"/>
<rect x="402" y="21" width="4" height="1" fill="#909090"/>
<rect x="408" y="21" width="2" height="1" fill="#909090"/>
<rect x="385" y="25" width="5" height="1" fill="#909090"/>
<rect x="392" y="25" width="8" height="1" fill="#909090"/>
<rect x="402" y="25" width="4" height="1" fill="#909090"/>
<rect x="408" y="25" width="2" height="1" fill="#909090"/>
<rect x="385" y="28" width="5" height="1" fill="#909090"/>
<rect x="392" y="28" width="8" height="1" fill="#909090"/>
<rect x="402" y="28" width="4" height="1" fill="#909090"/>
<rect x="408" y="28" width="2" height="1" fill="#909090"/>
<rect x="8" y="239" width="1005" height="1" fill="#d4d0c8"/>
<rect x="8" y="242" width="1005" height="1" fill="#d4d0c8"/>
<rect x="8" y="239" width="1" height="4" fill="#d4d0c8"/>
<rect x="1012" y="239" width="1" height="4" fill="#d4d0c8"/>
<path d="M12,240 h1 M11,241 h1 M20,240 h1 M19,241 h1 M28,240 h1 M27,241 h1 M36,240 h1 M35,241 h1 M44,240 h1 M43,241 h1 M52,240 h1 M51,241 h1 M60,240 h1 M59,241 h1 M68,240 h1 M67,241 h1 M76,240 h1 M75,241 h1 M84,240 h1 M83,241 h1 M92,240 h1 M91,241 h1 M100,240 h1 M99,241 h1 M108,240 h1 M107,241 h1 M116,240 h1 M115,241 h1 M124,240 h1 M123,241 h1 M132,240 h1 M131,241 h1 M140,240 h1 M139,241 h1 M148,240 h1 M147,241 h1 M156,240 h1 M155,241 h1 M164,240 h1 M163,241 h1 M172,240 h1 M171,241 h1 M180,240 h1 M179,241 h1 M188,240 h1 M187,241 h1 M196,240 h1 M195,241 h1 M204,240 h1 M203,241 h1 M212,240 h1 M211,241 h1 M220,240 h1 M219,241 h1 M228,240 h1 M227,241 h1 M236,240 h1 M235,241 h1 M244,240 h1 M243,241 h1 M252,240 h1 M251,241 h1 M260,240 h1 M259,241 h1 M268,240 h1 M267,241 h1 M276,240 h1 M275,241 h1 M284,240 h1 M283,241 h1 M292,240 h1 M291,241 h1 M300,240 h1 M299,241 h1 M308,240 h1 M307,241 h1 M316,240 h1 M315,241 h1 M324,240 h1 M323,241 h1 M332,240 h1 M331,241 h1 M340,240 h1 M339,241 h1 M348,240 h1 M347,241 h1 M356,240 h1 M355,241 h1 M364,240 h1 M363,241 h1 M372,240 h1 M371,241 h1 M380,240 h1 M379,241 h1 M388,240 h1 M387,241 h1 M396,240 h1 M395,241 h1 M404,240 h1 M403,241 h1 M412,240 h1 M411,241 h1 M420,240 h1 M419,241 h1 M428,240 h1 M427,241 h1 M436,240 h1 M435,241 h1 M444,240 h1 M443,241 h1 M452,240 h1 M451,241 h1 M460,240 h1 M459,241 h1 M468,240 h1 M467,241 h1 M476,240 h1 M475,241 h1 M484,240 h1 M483,241 h1 M492,240 h1 M491,241 h1 M500,240 h1 M499,241 h1 M508,240 h1 M507,241 h1 M516,240 h1 M515,241 h1 M524,240 h1 M523,241 h1 M532,240 h1 M531,241 h1 M540,240 h1 M539,241 h1 M548,240 h1 M547,241 h1 M556,240 h1 M555,241 h1 M564,240 h1 M563,241 h1 M572,240 h1 M571,241 h1 M580,240 h1 M579,241 h1 M588,240 h1 M587,241 h1 M596,240 h1 M595,241 h1 M604,240 h1 M603,241 h1 M612,240 h1 M611,241 h1 M620,240 h1 M619,241 h1 M628,240 h1 M627,241 h1 M636,240 h1 M635,241 h1 M644,240 h1 M643,241 h1 M652,240 h1 M651,241 h1 M660,240 h1 M659,241 h1 M668,240 h1 M667,241 h1 M676,240 h1 M675,241 h1 M684,240 h1 M683,241 h1 M692,240 h1 M691,241 h1 M700,240 h1 M699,241 h1 M708,240 h1 M707,241 h1 M716,240 h1 M715,241 h1 M724,240 h1 M723,241 h1 M732,240 h1 M731,241 h1 M740,240 h1 M739,241 h1 M748,240 h1 M747,241 h1 M756,240 h1 M755,241 h1 M764,240 h1 M763,241 h1 M772,240 h1 M771,241 h1 M780,240 h1 M779,241 h1 M788,240 h1 M787,241 h1 M796,240 h1 M795,241 h1 M804,240 h1 M803,241 h1 M812,240 h1 M811,241 h1 M820,240 h1 M819,241 h1 M828,240 h1 M827,241 h1 M836,240 h1 M835,241 h1 M844,240 h1 M843,241 h1 M852,240 h1 M851,241 h1 M860,240 h1 M859,241 h1 M868,240 h1 M867,241 h1 M876,240 h1 M875,241 h1 M884,240 h1 M883,241 h1 M892,240 h1 M891,241 h1 M900,240 h1 M899,241 h1 M908,240 h1 M907,241 h1 M916,240 h1 M915,241 h1 M924,240 h1 M923,241 h1 M932,240 h1 M931,241 h1 M940,240 h1 M939,241 h1 M948,240 h1 M947,241 h1 M956,240 h1 M955,241 h1 M964,240 h1 M963,241 h1 M972,240 h1 M971,241 h1 M980,240 h1 M979,241 h1 M988,240 h1 M987,241 h1 M996,240 h1 M995,241 h1 M1004,240 h1 M1003,241 h1 " stroke="#d4d0c8" fill="none" transform="translate(0,0.5)"/>
<rect x="8" y="327" width="1005" height="1" fill="#d4d0c8"/>
<rect x="8" y="330" width="1005" height="1" fill="#d4d0c8"/>
<rect x="8" y="327" width="1" height="4" fill="#d4d0c8"/>
<rect x="1012" y="327" width="1" height="4" fill="#d4d0c8"/>
<path d="M12,328 h1 M11,329 h1 M20,328 h1 M19,329 h1 M28,328 h1 M27,329 h1 M36,328 h1 M35,329 h1 M44,328 h1 M43,329 h1 M52,328 h1 M51,329 h1 M60,328 h1 M59,329 h1 M68,328 h1 M67,329 h1 M76,328 h1 M75,329 h1 M84,328 h1 M83,329 h1 M92,328 h1 M91,329 h1 M100,328 h1 M99,329 h1 M108,328 h1 M107,329 h1 M116,328 h1 M115,329 h1 M124,328 h1 M123,329 h1 M132,328 h1 M131,329 h1 M140,328 h1 M139,329 h1 M148,328 h1 M147,329 h1 M156,328 h1 M155,329 h1 M164,328 h1 M163,329 h1 M172,328 h1 M171,329 h1 M180,328 h1 M179,329 h1 M188,328 h1 M187,329 h1 M196,328 h1 M195,329 h1 M204,328 h1 M203,329 h1 M212,328 h1 M211,329 h1 M220,328 h1 M219,329 h1 M228,328 h1 M227,329 h1 M236,328 h1 M235,329 h1 M244,328 h1 M243,329 h1 M252,328 h1 M251,329 h1 M260,328 h1 M259,329 h1 M268,328 h1 M267,329 h1 M276,328 h1 M275,329 h1 M284,328 h1 M283,329 h1 M292,328 h1 M291,329 h1 M300,328 h1 M299,329 h1 M308,328 h1 M307,329 h1 M316,328 h1 M315,329 h1 M324,328 h1 M323,329 h1 M332,328 h1 M331,329 h1 M340,328 h1 M339,329 h1 M348,328 h1 M347,329 h1 M356,328 h1 M355,329 h1 M364,328 h1 M363,329 h1 M372,328 h1 M371,329 h1 M380,328 h1 M379,329 h1 M388,328 h1 M387,329 h1 M396,328 h1 M395,329 h1 M404,328 h1 M403,329 h1 M412,328 h1 M411,329 h1 M420,328 h1 M419,329 h1 M428,328 h1 M427,329 h1 M436,328 h1 M435,329 h1 M444,328 h1 M443,329 h1 M452,328 h1 M451,329 h1 M460,328 h1 M459,329 h1 M468,328 h1 M467,329 h1 M476,328 h1 M475,329 h1 M484,328 h1 M483,329 h1 M492,328 h1 M491,329 h1 M500,328 h1 M499,329 h1 M508,328 h1 M507,329 h1 M516,328 h1 M515,329 h1 M524,328 h1 M523,329 h1 M532,328 h1 M531,329 h1 M540,328 h1 M539,329 h1 M548,328 h1 M547,329 h1 M556,328 h1 M555,329 h1 M564,328 h1 M563,329 h1 M572,328 h1 M571,329 h1 M580,328 h1 M579,329 h1 M588,328 h1 M587,329 h1 M596,328 h1 M595,329 h1 M604,328 h1 M603,329 h1 M612,328 h1 M611,329 h1 M620,328 h1 M619,329 h1 M628,328 h1 M627,329 h1 M636,328 h1 M635,329 h1 M644,328 h1 M643,329 h1 M652,328 h1 M651,329 h1 M660,328 h1 M659,329 h1 M668,328 h1 M667,329 h1 M676,328 h1 M675,329 h1 M684,328 h1 M683,329 h1 M692,328 h1 M691,329 h1 M700,328 h1 M699,329 h1 M708,328 h1 M707,329 h1 M716,328 h1 M715,329 h1 M724,328 h1 M723,329 h1 M732,328 h1 M731,329 h1 M740,328 h1 M739,329 h1 M748,328 h1 M747,329 h1 M756,328 h1 M755,329 h1 M764,328 h1 M763,329 h1 M772,328 h1 M771,329 h1 M780,328 h1 M779,329 h1 M788,328 h1 M787,329 h1 M796,328 h1 M795,329 h1 M804,328 h1 M803,329 h1 M812,328 h1 M811,329 h1 M820,328 h1 M819,329 h1 M828,328 h1 M827,329 h1 M836,328 h1 M835,329 h1 M844,328 h1 M843,329 h1 M852,328 h1 M851,329 h1 M860,328 h1 M859,329 h1 M868,328 h1 M867,329 h1 M876,328 h1 M875,329 h1 M884,328 h1 M883,329 h1 M892,328 h1 M891,329 h1 M900,328 h1 M899,329 h1 M908,328 h1 M907,329 h1 M916,328 h1 M915,329 h1 M924,328 h1 M923,329 h1 M932,328 h1 M931,329 h1 M940,328 h1 M939,329 h1 M948,328 h1 M947,329 h1 M956,328 h1 M955,329 h1 M964,328 h1 M963,329 h1 M972,328 h1 M971,329 h1 M980,328 h1 M979,329 h1 M988,328 h1 M987,329 h1 M996,328 h1 M995,329 h1 M1004,328 h1 M1003,329 h1 " stroke="#d4d0c8" fill="none" transform="translate(0,0.5)"/>
<rect x="532" y="419" width="481" height="1" fill="#d4d0c8"/>
<rect x="532" y="422" width="481" height="1" fill="#d4d0c8"/>
<rect x="532" y="419" width="1" height="4" fill="#d4d0c8"/>
<rect x="1012" y="419" width="1" height="4" fill="#d4d0c8"/>
<path d="M536,420 h1 M535,421 h1 M544,420 h1 M543,421 h1 M552,420 h1 M551,421 h1 M560,420 h1 M559,421 h1 M568,420 h1 M567,421 h1 M576,420 h1 M575,421 h1 M584,420 h1 M583,421 h1 M592,420 h1 M591,421 h1 M600,420 h1 M599,421 h1 M608,420 h1 M607,421 h1 M616,420 h1 M615,421 h1 M624,420 h1 M623,421 h1 M632,420 h1 M631,421 h1 M640,420 h1 M639,421 h1 M648,420 h1 M647,421 h1 M656,420 h1 M655,421 h1 M664,420 h1 M663,421 h1 M672,420 h1 M671,421 h1 M680,420 h1 M679,421 h1 M688,420 h1 M687,421 h1 M696,420 h1 M695,421 h1 M704,420 h1 M703,421 h1 M712,420 h1 M711,421 h1 M720,420 h1 M719,421 h1 M728,420 h1 M727,421 h1 M736,420 h1 M735,421 h1 M744,420 h1 M743,421 h1 M752,420 h1 M751,421 h1 M760,420 h1 M759,421 h1 M768,420 h1 M767,421 h1 M776,420 h1 M775,421 h1 M784,420 h1 M783,421 h1 M792,420 h1 M791,421 h1 M800,420 h1 M799,421 h1 M808,420 h1 M807,421 h1 M816,420 h1 M815,421 h1 M824,420 h1 M823,421 h1 M832,420 h1 M831,421 h1 M840,420 h1 M839,421 h1 M848,420 h1 M847,421 h1 M856,420 h1 M855,421 h1 M864,420 h1 M863,421 h1 M872,420 h1 M871,421 h1 M880,420 h1 M879,421 h1 M888,420 h1 M887,421 h1 M896,420 h1 M895,421 h1 M904,420 h1 M903,421 h1 M912,420 h1 M911,421 h1 M920,420 h1 M919,421 h1 M928,420 h1 M927,421 h1 M936,420 h1 M935,421 h1 M944,420 h1 M943,421 h1 M952,420 h1 M951,421 h1 M960,420 h1 M959,421 h1 M968,420 h1 M967,421 h1 M976,420 h1 M975,421 h1 M984,420 h1 M983,421 h1 M992,420 h1 M991,421 h1 M1000,420 h1 M999,421 h1 M1008,420 h1 M1007,421 h1 " stroke="#d4d0c8" fill="none" transform="translate(0,0.5)"/>
<rect x="8" y="465" width="525" height="1" fill="#d4d0c8"/>
<rect x="8" y="468" width="525" height="1" fill="#d4d0c8"/>
<rect x="8" y="465" width="1" height="4" fill="#d4d0c8"/>
<rect x="532" y="465" width="1" height="4" fill="#d4d0c8"/>
<path d="M12,466 h1 M11,467 h1 M20,466 h1 M19,467 h1 M28,466 h1 M27,467 h1 M36,466 h1 M35,467 h1 M44,466 h1 M43,467 h1 M52,466 h1 M51,467 h1 M60,466 h1 M59,467 h1 M68,466 h1 M67,467 h1 M76,466 h1 M75,467 h1 M84,466 h1 M83,467 h1 M92,466 h1 M91,467 h1 M100,466 h1 M99,467 h1 M108,466 h1 M107,467 h1 M116,466 h1 M115,467 h1 M124,466 h1 M123,467 h1 M132,466 h1 M131,467 h1 M140,466 h1 M139,467 h1 M148,466 h1 M147,467 h1 M156,466 h1 M155,467 h1 M164,466 h1 M163,467 h1 M172,466 h1 M171,467 h1 M180,466 h1 M179,467 h1 M188,466 h1 M187,467 h1 M196,466 h1 M195,467 h1 M204,466 h1 M203,467 h1 M212,466 h1 M211,467 h1 M220,466 h1 M219,467 h1 M228,466 h1 M227,467 h1 M236,466 h1 M235,467 h1 M244,466 h1 M243,467 h1 M252,466 h1 M251,467 h1 M260,466 h1 M259,467 h1 M268,466 h1 M267,467 h1 M276,466 h1 M275,467 h1 M284,466 h1 M283,467 h1 M292,466 h1 M291,467 h1 M300,466 h1 M299,467 h1 M308,466 h1 M307,467 h1 M316,466 h1 M315,467 h1 M324,466 h1 M323,467 h1 M332,466 h1 M331,467 h1 M340,466 h1 M339,467 h1 M348,466 h1 M347,467 h1 M356,466 h1 M355,467 h1 M364,466 h1 M363,467 h1 M372,466 h1 M371,467 h1 M380,466 h1 M379,467 h1 M388,466 h1 M387,467 h1 M396,466 h1 M395,467 h1 M404,466 h1 M403,467 h1 M412,466 h1 M411,467 h1 M420,466 h1 M419,467 h1 M428,466 h1 M427,467 h1 M436,466 h1 M435,467 h1 M444,466 h1 M443,467 h1 M452,466 h1 M451,467 h1 M460,466 h1 M459,467 h1 M468,466 h1 M467,467 h1 M476,466 h1 M475,467 h1 M484,466 h1 M483,467 h1 M492,466 h1 M491,467 h1 M500,466 h1 M499,467 h1 M508,466 h1 M507,467 h1 M516,466 h1 M515,467 h1 M524,466 h1 M523,467 h1 " stroke="#d4d0c8" fill="none" transform="translate(0,0.5)"/>
<rect x="8" y="551" width="1005" height="1" fill="#d4d0c8"/>
<rect x="8" y="554" width="1005" height="1" fill="#d4d0c8"/>
<rect x="8" y="551" width="1" height="4" fill="#d4d0c8"/>
<rect x="1012" y="551" width="1" height="4" fill="#d4d0c8"/>
<path d="M12,552 h1 M11,553 h1 M20,552 h1 M19,553 h1 M28,552 h1 M27,553 h1 M36,552 h1 M35,553 h1 M44,552 h1 M43,553 h1 M52,552 h1 M51,553 h1 M60,552 h1 M59,553 h1 M68,552 h1 M67,553 h1 M76,552 h1 M75,553 h1 M84,552 h1 M83,553 h1 M92,552 h1 M91,553 h1 M100,552 h1 M99,553 h1 M108,552 h1 M107,553 h1 M116,552 h1 M115,553 h1 M124,552 h1 M123,553 h1 M132,552 h1 M131,553 h1 M140,552 h1 M139,553 h1 M148,552 h1 M147,553 h1 M156,552 h1 M155,553 h1 M164,552 h1 M163,553 h1 M172,552 h1 M171,553 h1 M180,552 h1 M179,553 h1 M188,552 h1 M187,553 h1 M196,552 h1 M195,553 h1 M204,552 h1 M203,553 h1 M212,552 h1 M211,553 h1 M220,552 h1 M219,553 h1 M228,552 h1 M227,553 h1 M236,552 h1 M235,553 h1 M244,552 h1 M243,553 h1 M252,552 h1 M251,553 h1 M260,552 h1 M259,553 h1 M268,552 h1 M267,553 h1 M276,552 h1 M275,553 h1 M284,552 h1 M283,553 h1 M292,552 h1 M291,553 h1 M300,552 h1 M299,553 h1 M308,552 h1 M307,553 h1 M316,552 h1 M315,553 h1 M324,552 h1 M323,553 h1 M332,552 h1 M331,553 h1 M340,552 h1 M339,553 h1 M348,552 h1 M347,553 h1 M356,552 h1 M355,553 h1 M364,552 h1 M363,553 h1 M372,552 h1 M371,553 h1 M380,552 h1 M379,553 h1 M388,552 h1 M387,553 h1 M396,552 h1 M395,553 h1 M404,552 h1 M403,553 h1 M412,552 h1 M411,553 h1 M420,552 h1 M419,553 h1 M428,552 h1 M427,553 h1 M436,552 h1 M435,553 h1 M444,552 h1 M443,553 h1 M452,552 h1 M451,553 h1 M460,552 h1 M459,553 h1 M468,552 h1 M467,553 h1 M476,552 h1 M475,553 h1 M484,552 h1 M483,553 h1 M492,552 h1 M491,553 h1 M500,552 h1 M499,553 h1 M508,552 h1 M507,553 h1 M516,552 h1 M515,553 h1 M524,552 h1 M523,553 h1 M532,552 h1 M531,553 h1 M540,552 h1 M539,553 h1 M548,552 h1 M547,553 h1 M556,552 h1 M555,553 h1 M564,552 h1 M563,553 h1 M572,552 h1 M571,553 h1 M580,552 h1 M579,553 h1 M588,552 h1 M587,553 h1 M596,552 h1 M595,553 h1 M604,552 h1 M603,553 h1 M612,552 h1 M611,553 h1 M620,552 h1 M619,553 h1 M628,552 h1 M627,553 h1 M636,552 h1 M635,553 h1 M644,552 h1 M643,553 h1 M652,552 h1 M651,553 h1 M660,552 h1 M659,553 h1 M668,552 h1 M667,553 h1 M676,552 h1 M675,553 h1 M684,552 h1 M683,553 h1 M692,552 h1 M691,553 h1 M700,552 h1 M699,553 h1 M708,552 h1 M707,553 h1 M716,552 h1 M715,553 h1 M724,552 h1 M723,553 h1 M732,552 h1 M731,553 h1 M740,552 h1 M739,553 h1 M748,552 h1 M747,553 h1 M756,552 h1 M755,553 h1 M764,552 h1 M763,553 h1 M772,552 h1 M771,553 h1 M780,552 h1 M779,553 h1 M788,552 h1 M787,553 h1 M796,552 h1 M795,553 h1 M804,552 h1 M803,553 h1 M812,552 h1 M811,553 h1 M820,552 h1 M819,553 h1 M828,552 h1 M827,553 h1 M836,552 h1 M835,553 h1 M844,552 h1 M843,553 h1 M852,552 h1 M851,553 h1 M860,552 h1 M859,553 h1 M868,552 h1 M867,553 h1 M876,552 h1 M875,553 h1 M884,552 h1 M883,553 h1 M892,552 h1 M891,553 h1 M900,552 h1 M899,553 h1 M908,552 h1 M907,553 h1 M916,552 h1 M915,553 h1 M924,552 h1 M923,553 h1 M932,552 h1 M931,553 h1 M940,552 h1 M939,553 h1 M948,552 h1 M947,553 h1 M956,552 h1 M955,553 h1 M964,552 h1 M963,553 h1 M972,552 h1 M971,553 h1 M980,552 h1 M979,553 h1 M988,552 h1 M987,553 h1 M996,552 h1 M995,553 h1 M1004,552 h1 M1003,553 h1 " stroke="#d4d0c8" fill="none" transform="translate(0,0.5)"/>
<path d="M70.5,205.5 L70.5,271.5" fill="none" stroke="#ffffff" stroke-linecap="square"/>
<path d="M139.5,110.5 L139.5,118.5 L254.5,118.5 L254.5,124.5" fill="none" stroke="#ffffff" stroke-linecap="square"/>
<path d="M339.5,142.5 L339.5,178.5" fill="none" stroke="#ffffff" stroke-linecap="square"/>
<path d="M318.5,208.5 L296.5,208.5 L296.5,218.5" fill="none" stroke="#ffffff" stroke-linecap="square"/>
<path d="M330.5,229.5 L330.5,282.5" fill="none" stroke="#ffffff" stroke-linecap="square"/>
<path d="M354.5,229.5 L354.5,252.5 L409.5,252.5 L409.5,282.5" fill="none" stroke="#ffffff" stroke-linecap="square"/>
<path d="M324.5,331.5 L324.5,392.5" fill="none" stroke="#ffffff" stroke-linecap="square"/>
<path d="M405.5,331.5 L405.5,369.5 L324.5,369.5" fill="none" stroke="#ffffff" stroke-linecap="square"/>
<path d="M301.5,415.5 L301.5,392.5 L338.5,392.5 L338.5,415.5" fill="none" stroke="#ffffff" stroke-linecap="square"/>
<path d="M302.5,465.5 L302.5,499.5" fill="none" stroke="#ffffff" stroke-linecap="square"/>
<path d="M338.5,465.5 L338.5,499.5" fill="none" stroke="#ffffff" stroke-linecap="square"/>
<path d="M320.5,549.5 L320.5,569.5 L292.5,569.5 L292.5,611.5" fill="none" stroke="#ffffff" stroke-linecap="square"/>
<path d="M165.5,294.5 L165.5,356.5" fill="none" stroke="#ffffff" stroke-linecap="square"/>
<path d="M189.5,391.5 L189.5,419.5" fill="none" stroke="#ffffff" stroke-linecap="square"/>
<path d="M190.5,469.5 L190.5,611.5 L128.5,611.5 L128.5,707.5" fill="none" stroke="#ffffff" stroke-linecap="square"/>
<path d="M190.5,595.5 L202.5,595.5 L202.5,585.5" fill="none" stroke="#ffffff" stroke-linecap="square"/>
<path d="M66.5,555.5 L66.5,579.5" fill="none" stroke="#ffffff" stroke-linecap="square"/>
<path d="M66.5,600.5 L66.5,648.5" fill="none" stroke="#ffffff" stroke-linecap="square"/>
<path d="M368.5,637.5 L368.5,657.5 L344.5,657.5 L344.5,685.5" fill="none" stroke="#ffffff" stroke-linecap="square"/>
<path d="M632.5,117.5 L632.5,340.5 L721.5,340.5 L721.5,358.5" fill="none" stroke="#ffffff" stroke-linecap="square"/>
<path d="M650.5,118.5 L650.5,157.5 L697.5,157.5 L697.5,193.5" fill="none" stroke="#ffffff" stroke-linecap="square"/>
<path d="M697.5,243.5 L697.5,313.5 L868.5,313.5 L868.5,481.5" fill="none" stroke="#ffffff" stroke-linecap="square"/>
<path d="M651.5,231.5 L669.5,231.5" fill="none" stroke="#ffffff" stroke-linecap="square"/>
<path d="M660.5,231.5 L660.5,491.5" fill="none" stroke="#ffffff" stroke-linecap="square"/>
<path d="M629.5,385.5 L629.5,401.5 L660.5,401.5" fill="none" stroke="#ffffff" stroke-linecap="square"/>
<path d="M791.5,113.5 L802.5,113.5 L802.5,184.5" fill="none" stroke="#ffffff" stroke-linecap="square"/>
<path d="M802.5,243.5 L802.5,256.5" fill="none" stroke="#ffffff" stroke-linecap="square"/>
<path d="M908.5,110.5 L908.5,163.5 L883.5,163.5 L883.5,181.5" fill="none" stroke="#ffffff" stroke-linecap="square"/>
<path d="M908.5,146.5 L928.5,146.5" fill="none" stroke="#ffffff" stroke-linecap="square"/>
<path d="M774.5,393.5 L774.5,403.5 L759.5,403.5 L759.5,426.5" fill="none" stroke="#ffffff" stroke-linecap="square"/>
<path d="M712.5,418.5 L712.5,457.5 L688.5,457.5 L688.5,592.5" fill="none" stroke="#ffffff" stroke-linecap="square"/>
<path d="M737.5,416.5 L737.5,419.5" fill="none" stroke="#ffffff" stroke-linecap="square"/>
<path d="M713.5,409.5 L713.5,411.5" fill="none" stroke="#ffffff" stroke-linecap="square"/>
<path d="M737.5,409.5 L737.5,411.5" fill="none" stroke="#ffffff" stroke-linecap="square"/>
<path d="M713.5,416.5 L713.5,418.5" fill="none" stroke="#ffffff" stroke-linecap="square"/>
<path d="M738.5,465.5 L738.5,471.5 L732.5,471.5 L732.5,477.5" fill="none" stroke="#ffffff" stroke-linecap="square"/>
<path d="M758.5,465.5 L758.5,471.5 L764.5,471.5 L764.5,477.5" fill="none" stroke="#ffffff" stroke-linecap="square"/>
<path d="M716.5,555.5 L716.5,559.5 L631.5,559.5 L631.5,685.5" fill="none" stroke="#ffffff" stroke-linecap="square"/>
<path d="M720.5,555.5 L720.5,565.5 L704.5,565.5 L704.5,685.5" fill="none" stroke="#ffffff" stroke-linecap="square"/>
<path d="M704.5,572.5 L774.5,572.5 L774.5,555.5" fill="none" stroke="#ffffff" stroke-linecap="square"/>
<path d="M724.5,555.5 L724.5,592.5" fill="none" stroke="#ffffff" stroke-linecap="square"/>
<path d="M542.5,688.5 L542.5,592.5 L752.5,592.5 L752.5,565.5 L771.5,565.5 L771.5,555.5" fill="none" stroke="#ffffff" stroke-linecap="square"/>
<path d="M779.5,555.5 L779.5,605.5 L631.5,605.5" fill="none" stroke="#ffffff" stroke-linecap="square"/>
<path d="M858.5,555.5 L858.5,580.5" fill="none" stroke="#ffffff" stroke-linecap="square"/>
<path d="M880.5,555.5 L880.5,620.5 L778.5,620.5 L778.5,697.5" fill="none" stroke="#ffffff" stroke-linecap="square"/>
<path d="M854.5,658.5 L854.5,668.5 L878.5,668.5 L878.5,706.5" fill="none" stroke="#ffffff" stroke-linecap="square"/>
<rect x="323" y="368" width="3" height="3" fill="#ffffff"/>
<rect x="323" y="391" width="3" height="3" fill="#ffffff"/>
<rect x="189" y="594" width="3" height="3" fill="#ffffff"/>
<rect x="659" y="230" width="3" height="3" fill="#ffffff"/>
<rect x="659" y="400" width="3" height="3" fill="#ffffff"/>
<rect x="907" y="145" width="3" height="3" fill="#ffffff"/>
<rect x="687" y="591" width="3" height="3" fill="#ffffff"/>
<rect x="723" y="591" width="3" height="3" fill="#ffffff"/>
<rect x="703" y="571" width="3" height="3" fill="#ffffff"/>
<rect x="630" y="604" width="3" height="3" fill="#ffffff"/>
<path d="M280.5,133.5 L313.5,133.5" fill="none" stroke="#d4d0c8" stroke-linecap="square" stroke-dasharray="9 3 3 3 3 3"/>
<path d="M804.5,705.5 L820.5,705.5 L820.5,649.5 L829.5,649.5" fill="none" stroke="#d4d0c8" stroke-linecap="square" stroke-dasharray="4 3 3 3 3 3 9 3"/>
<path d="M46.5,280.5 L86.5,280.5 L95.5,271.5 L55.5,271.5 Z" fill="#409898" stroke="#409898"/>
<rect x="46" y="280" width="40" height="275" fill="#52c4c4"/>
<path d="M86,280 L95,271 L95,555 L86,555 Z" fill="#62e2e2"/>
<rect x="62.5" y="305.5" width="8" height="5" fill="#00ffff" stroke="#000000"/>
<rect x="62.5" y="331.5" width="8" height="5" fill="#00ffff" stroke="#000000"/>
<rect x="54.5" y="360.5" width="23" height="17" fill="#52c4c4" stroke="#2c9c9c"/>
<rect x="46" y="579" width="40" height="14" fill="#52c4c4"/>
<path d="M86,579 L95,579 L95,584 L86,593 Z" fill="#62e2e2"/>
<path d="M46,593 L86,593 L66,601 Z" fill="#44aaaa"/>
<rect x="62.5" y="583.5" width="8" height="5" fill="#00ffff" stroke="#000000"/>
<path d="M63.5,560.5 L69.5,560.5 L72.5,563.5 L72.5,569.5 L69.5,572.5 L63.5,572.5 L60.5,569.5 L60.5,563.5 Z" fill="#00ffff" stroke="#000000"/>
<path d="M62.5,562.5 L70.5,570.5 M70.5,562.5 L62.5,570.5" fill="none" stroke="#000000" shape-rendering="geometricPrecision"/>
<use href="#ehead" transform="translate(0,0)"/>
<use href="#ehead" transform="translate(770,0)"/>
<use href="#hsc" transform="translate(0,0)"/>
<use href="#send" transform="translate(0,0)"/>
<use href="#bin" transform="translate(0,0)"/>
<use href="#bin" transform="translate(383,180)"/>
<rect x="710.5" y="411.5" width="6" height="4" fill="#00ffff" stroke="#000000"/>
<rect x="734.5" y="411.5" width="6" height="4" fill="#00ffff" stroke="#000000"/>
<use href="#m215" transform="translate(0,0)"/>
<use href="#m215" transform="translate(79,0)"/>
<use href="#vf" transform="translate(0,0)"/>
<use href="#hop210" transform="translate(0,0)"/>
<use href="#m218" transform="translate(0,0)"/>
<use href="#m218" transform="translate(444,-226)"/>
<use href="#m218" transform="translate(504,-226)"/>
<use href="#m224" transform="translate(0,0)"/>
<use href="#m224" transform="translate(0,84)"/>
<rect x="305.5" y="467.5" width="6" height="4" fill="#00ffff" stroke="#000000"/>
<rect x="330.5" y="467.5" width="6" height="4" fill="#00ffff" stroke="#000000"/>
<use href="#fan" transform="translate(0,0)"/>
<use href="#lc" transform="translate(0,0)"/>
<use href="#lc" transform="translate(357,-39) scale(-1,1)"/>
<use href="#lc" transform="translate(409,37) scale(-1,1)"/>
<use href="#vf" transform="translate(369,291) scale(-1,1)"/>
<use href="#efoot" transform="translate(0,0)"/>
<use href="#efoot" transform="translate(1008,0) scale(-1,1)"/>
<use href="#vf" transform="translate(466,-177)"/>
<use href="#vf" transform="translate(817,-177) scale(-1,1)"/>
<use href="#vf" transform="translate(627,-180)"/>
<use href="#vf" transform="translate(463,91)"/>
<use href="#vf" transform="translate(941,99) scale(-1,1)"/>
<use href="#tank" transform="translate(0,0)"/>
<use href="#hscd" transform="translate(1139,57) scale(-1,1)"/>
<use href="#hsc" transform="translate(915,367) scale(-1,1)"/>
<use href="#hop2" transform="translate(0,0)"/>
<use href="#m226" transform="translate(0,0)"/>
<use href="#m234" transform="translate(0,0)"/>
<use href="#hsc" transform="translate(288,564)"/>
<use href="#lc" transform="translate(695,37) scale(-1,1)"/>
<use href="#lc" transform="translate(768,37) scale(-1,1)"/>
<use href="#hsc" transform="translate(523,573)"/>
<use href="#send" transform="translate(513,516)"/>
<use href="#bell" transform="translate(0,0)"/>
<rect x="799.5" y="123.5" width="6" height="4" fill="#00ffff" stroke="#000000"/>
<circle cx="813.5" cy="172.5" r="7" fill="none" stroke="#00ffff" stroke-width="2" shape-rendering="geometricPrecision"/>
<circle cx="813.5" cy="172.5" r="2.6" fill="none" stroke="#00ffff" shape-rendering="geometricPrecision"/>
<rect x="813" y="172" width="1" height="1" fill="#00ffff"/>
<use href="#disp" transform="translate(247,142)"/>
<use href="#disp" transform="translate(98,249)"/>
<use href="#disp" transform="translate(118,339)"/>
<use href="#disp" transform="translate(271,283)"/>
<use href="#disp" transform="translate(351,283)"/>
<use href="#disp" transform="translate(98,561)"/>
<use href="#disp" transform="translate(18,631)"/>
<use href="#disp" transform="translate(297,592)"/>
<use href="#disp" transform="translate(349,668)"/>
<use href="#disp" transform="translate(563,70)"/>
<use href="#disp" transform="translate(676,70)"/>
<use href="#disp" transform="translate(725,71)"/>
<use href="#disp" transform="translate(563,338)"/>
<use href="#disp" transform="translate(803,346)"/>
<use href="#disp" transform="translate(824,460)"/>
<use href="#disp" transform="translate(547,668)"/>
<use href="#disp" transform="translate(635,668)"/>
<use href="#disp" transform="translate(709,668)"/>
<use href="#disp" transform="translate(777,713)"/>
<use href="#calc" transform="translate(233,143)"/>
<use href="#calc" transform="translate(142,250)"/>
<use href="#calc" transform="translate(172,341)"/>
<use href="#calc" transform="translate(313,267)"/>
<use href="#calc" transform="translate(393,267)"/>
<use href="#calc" transform="translate(80,560)"/>
<use href="#calc" transform="translate(22,650)"/>
<use href="#calc" transform="translate(322,611)"/>
<use href="#calc" transform="translate(374,687)"/>
<use href="#calc" transform="translate(611,71)"/>
<use href="#calc" transform="translate(661,71)"/>
<use href="#calc" transform="translate(769,71)"/>
<use href="#calc" transform="translate(606,338)"/>
<use href="#calc" transform="translate(788,348)"/>
<use href="#calc" transform="translate(852,441)"/>
<use href="#calc" transform="translate(572,687)"/>
<use href="#calc" transform="translate(660,687)"/>
<use href="#calc" transform="translate(734,687)"/>
<use href="#calc" transform="translate(761,715)"/>
<text class="lab" x="107.5" y="82" font-size="12">211</text>
<text class="lab" x="199.5" y="140" font-size="12">212</text>
<text class="lab" x="348.5" y="170" font-size="12">213</text>
<text class="lab" x="108.5" y="287" font-size="12">209</text>
<text class="lab" x="337.5" y="274" font-size="12">215</text>
<text class="lab" x="415.5" y="274" font-size="12">216</text>
<text class="lab" x="331.5" y="348" font-size="12" textLength="38">215-1</text>
<text class="lab" x="412.5" y="348" font-size="12" textLength="38">216-1</text>
<text class="lab" x="119.5" y="377" font-size="12">210</text>
<text class="lab" x="154.5" y="411" font-size="12">218</text>
<text class="lab" x="363.5" y="443" font-size="12">224</text>
<text class="lab" x="363.5" y="527" font-size="12">259</text>
<text class="lab" x="13.5" y="514" font-size="12">247</text>
<text class="lab" x="27.5" y="572" font-size="12">245</text>
<text class="lab" x="234.5" y="575" font-size="12">227</text>
<text class="lab" x="291.5" y="641" font-size="12">231</text>
<text class="lab" x="40.5" y="680" font-size="12">208</text>
<text class="lab" x="343.5" y="717" font-size="12">237</text>
<text class="lab" x="572.5" y="107" font-size="12">238</text>
<text class="lab" x="682.5" y="107" font-size="12">236</text>
<text class="lab" x="735.5" y="107" font-size="12">232</text>
<text class="lab" x="877.5" y="82" font-size="12">241</text>
<text class="lab" x="812.5" y="154" font-size="12" textLength="38">233-1</text>
<text class="lab" x="764.5" y="174" font-size="12">233</text>
<text class="lab" x="598.5" y="185" font-size="12">254</text>
<text class="lab" x="658.5" y="185" font-size="12">255</text>
<text class="lab" x="863.5" y="213" font-size="12">251</text>
<text class="lab" x="572.5" y="376" font-size="12">288</text>
<text class="lab" x="671.5" y="378" font-size="12">225</text>
<text class="lab" x="806.5" y="383" font-size="12">230</text>
<text class="lab" x="878.5" y="473" font-size="12">234</text>
<text class="lab" x="788.5" y="496" font-size="12">226</text>
<text class="lab" x="642.5" y="524" font-size="12">298</text>
<text class="lab" x="487.5" y="704" font-size="12">227</text>
<text class="lab" x="629.5" y="717" font-size="12">235</text>
<text class="lab" x="702.5" y="717" font-size="12">229</text>
<text class="lab" x="786.5" y="688" font-size="12">240</text>
<text class="lab" x="58" y="374" font-size="12">54</text>
<text class="sm" x="53" y="195" font-size="11">из 207</text>
<text class="sm" x="281" y="231" font-size="11">М.фр.</text>
<text class="sm" x="933" y="151" font-size="11">в 250</text>
<text class="sm" x="789" y="272" font-size="11">в 237</text>
<text class="sm" x="598" y="504" font-size="11">лузга</text>
<text class="sm" x="841" y="592" font-size="11">в 237</text>
<text class="sm" x="353" y="632" font-size="11">из 233</text></svg></body></html>
